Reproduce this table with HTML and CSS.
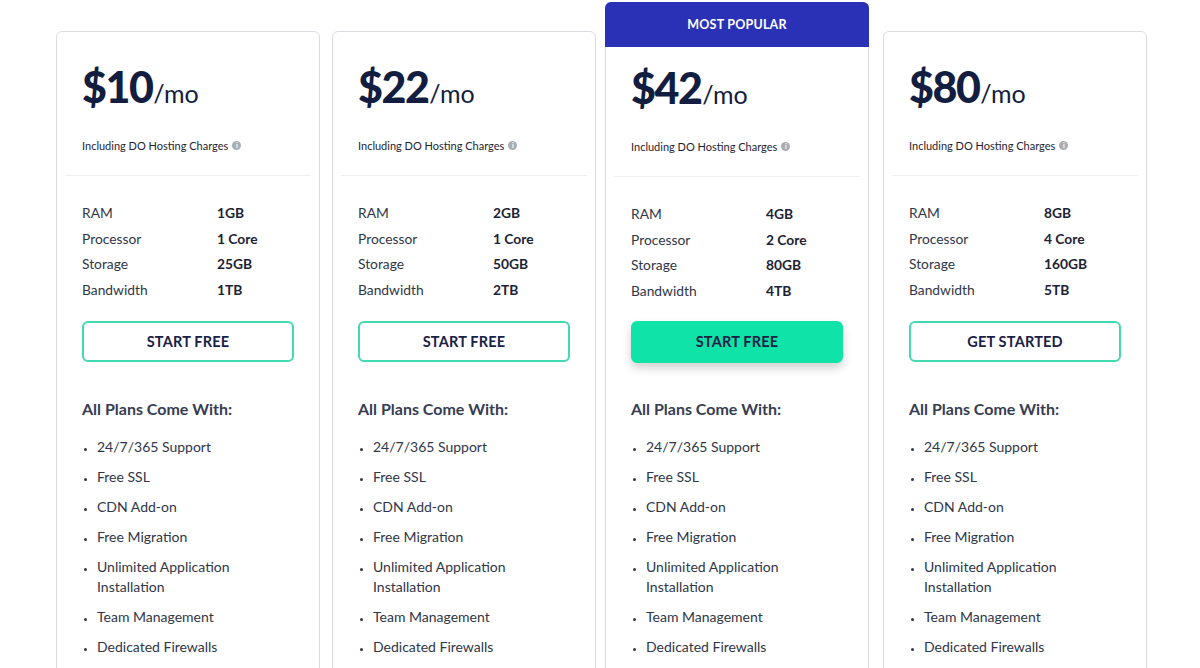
FILE: index.html
```html
<!DOCTYPE html>
<html lang="en">
<head>
<meta charset="utf-8">
<title>Pricing</title>
<link rel="stylesheet" href="styles.css">
</head>
<body>
<div class="plans">
  <div class="card">
    <div class="top">
      <div class="price"><span class="amount">$10</span><span class="per">/mo</span></div>
      <div class="note">Including DO Hosting Charges <span class="info">i</span></div>
    </div>
    <div class="body">
      <dl class="specs">
        <dt>RAM</dt><dd>1GB</dd>
        <dt>Processor</dt><dd>1 Core</dd>
        <dt>Storage</dt><dd>25GB</dd>
        <dt>Bandwidth</dt><dd>1TB</dd>
      </dl>
      <a class="btn">START FREE</a>
      <h3 class="with">All Plans Come With:</h3>
      <ul class="features">
        <li>24/7/365 Support</li>
        <li>Free SSL</li>
        <li>CDN Add-on</li>
        <li>Free Migration</li>
        <li>Unlimited Application Installation</li>
        <li>Team Management</li>
        <li>Dedicated Firewalls</li>
      </ul>
    </div>
  </div>
  <div class="card">
    <div class="top">
      <div class="price"><span class="amount">$22</span><span class="per">/mo</span></div>
      <div class="note">Including DO Hosting Charges <span class="info">i</span></div>
    </div>
    <div class="body">
      <dl class="specs">
        <dt>RAM</dt><dd>2GB</dd>
        <dt>Processor</dt><dd>1 Core</dd>
        <dt>Storage</dt><dd>50GB</dd>
        <dt>Bandwidth</dt><dd>2TB</dd>
      </dl>
      <a class="btn">START FREE</a>
      <h3 class="with">All Plans Come With:</h3>
      <ul class="features">
        <li>24/7/365 Support</li>
        <li>Free SSL</li>
        <li>CDN Add-on</li>
        <li>Free Migration</li>
        <li>Unlimited Application Installation</li>
        <li>Team Management</li>
        <li>Dedicated Firewalls</li>
      </ul>
    </div>
  </div>
  <div class="card popular">
    <div class="badge">MOST POPULAR</div>
    <div class="top">
      <div class="price"><span class="amount">$42</span><span class="per">/mo</span></div>
      <div class="note">Including DO Hosting Charges <span class="info">i</span></div>
    </div>
    <div class="body">
      <dl class="specs">
        <dt>RAM</dt><dd>4GB</dd>
        <dt>Processor</dt><dd>2 Core</dd>
        <dt>Storage</dt><dd>80GB</dd>
        <dt>Bandwidth</dt><dd>4TB</dd>
      </dl>
      <a class="btn btn-fill">START FREE</a>
      <h3 class="with">All Plans Come With:</h3>
      <ul class="features">
        <li>24/7/365 Support</li>
        <li>Free SSL</li>
        <li>CDN Add-on</li>
        <li>Free Migration</li>
        <li>Unlimited Application Installation</li>
        <li>Team Management</li>
        <li>Dedicated Firewalls</li>
      </ul>
    </div>
  </div>
  <div class="card">
    <div class="top">
      <div class="price"><span class="amount">$80</span><span class="per">/mo</span></div>
      <div class="note">Including DO Hosting Charges <span class="info">i</span></div>
    </div>
    <div class="body">
      <dl class="specs">
        <dt>RAM</dt><dd>8GB</dd>
        <dt>Processor</dt><dd>4 Core</dd>
        <dt>Storage</dt><dd>160GB</dd>
        <dt>Bandwidth</dt><dd>5TB</dd>
      </dl>
      <a class="btn">GET STARTED</a>
      <h3 class="with">All Plans Come With:</h3>
      <ul class="features">
        <li>24/7/365 Support</li>
        <li>Free SSL</li>
        <li>CDN Add-on</li>
        <li>Free Migration</li>
        <li>Unlimited Application Installation</li>
        <li>Team Management</li>
        <li>Dedicated Firewalls</li>
      </ul>
    </div>
  </div>
</div>
</body>
</html>
```
FILE: styles.css
```css
* { box-sizing: border-box; }
html, body { margin: 0; padding: 0; background: #fff; }
body {
  font-family: Lato, "Liberation Sans", sans-serif;
  color: #2f3648;
  overflow: hidden;
  height: 668px;
}
.plans {
  display: flex;
  align-items: flex-start;
  gap: 12px;
  padding: 2px 0 0 56px;
}
.card {
  width: 264px;
  flex: none;
  margin-top: 29px;
  border: 1px solid #d9dbe0;
  border-radius: 6px;
  background: #fff;
  height: 700px;
}
.card.popular {
  margin-top: 0;
  margin-left: -3px;
  margin-right: 2px;
}
.badge {
  margin: -1px -1px 0;
  height: 45px;
  background: #2b31b7;
  border-radius: 6px 6px 0 0;
  color: #fff;
  font-weight: 700;
  font-size: 12.5px;
  letter-spacing: 0.2px;
  display: flex;
  align-items: center;
  justify-content: center;
}
.top {
  margin: 0 8px;
  padding: 29px 17px 23px;
  border-bottom: 1px solid #eceef1;
}
.popular .top { padding-top: 15px; padding-bottom: 23px; }
.price {
  color: #121d3f;
  display: flex;
  align-items: baseline;
  height: 64px;
}
.amount {
  font-size: 43px;
  font-weight: 900;
  letter-spacing: -1.5px;
}
.per {
  font-size: 25px;
  font-weight: 400;
  margin-left: 1px;
}
.note {
  margin-top: 14px;
  font-size: 11px;
  color: #1f2433;
  display: flex;
  align-items: center;
  gap: 4px;
}
.info {
  width: 9px;
  height: 9px;
  border-radius: 50%;
  background: #a9adb5;
  color: #fff;
  font-size: 7px;
  font-weight: 700;
  display: inline-flex;
  align-items: center;
  justify-content: center;
  line-height: 1;
}
.body { padding: 0 25px; }
.specs {
  margin: 24px 0 0;
  display: grid;
  grid-template-columns: 135px 1fr;
  row-gap: 0;
  font-size: 13.8px;
  line-height: 25.7px;
}
.specs dt { color: #2f3648; }
.specs dd { margin: 0; font-weight: 700; color: #1c2235; }
.btn {
  display: flex;
  align-items: center;
  justify-content: center;
  margin-top: 18px;
  width: 212px;
  height: 41px;
  border: 2px solid #43d9b3;
  border-radius: 6px;
  font-size: 14.5px;
  font-weight: 700;
  color: #1a2146;
  letter-spacing: 0.2px;
}
.btn-fill {
  margin-top: 17px;
  background: #10e3a8;
  border-color: #10e3a8;
  box-shadow: 0 5px 10px rgba(0, 0, 0, 0.18);
  height: 42px;
}
.with {
  margin: 37px 0 0;
  font-size: 16px;
  font-weight: 700;
  color: #363d51;
}
.popular .with { margin-top: 36px; }
.features {
  margin: 19px 0 0;
  padding: 0 50px 0 15px;
  font-size: 14px;
  line-height: 20px;
  color: #2f3648;
}
.features li { margin-bottom: 10px; padding-left: 0; }
.features li::marker { font-size: 10px; }
```
